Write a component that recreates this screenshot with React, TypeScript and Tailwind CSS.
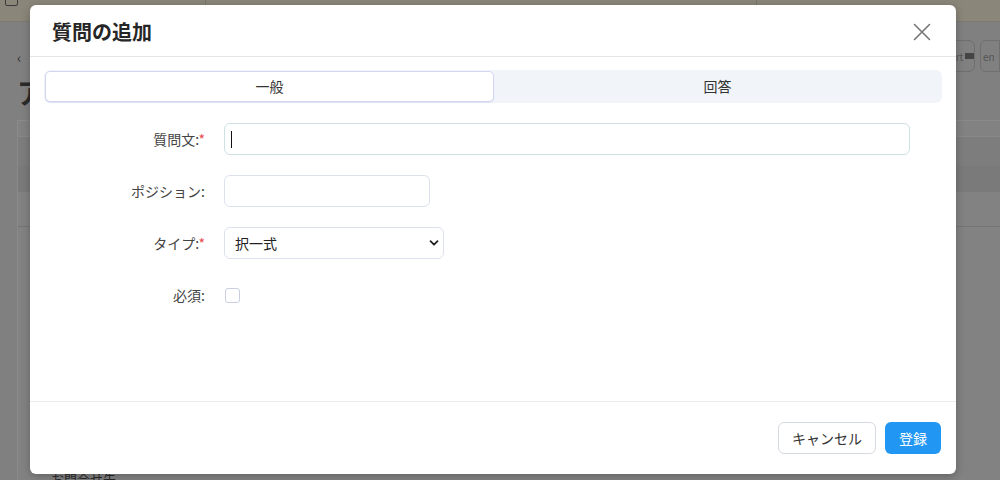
import React from "react";

const jp = { fontFamily: '"Noto Sans CJK JP", "Noto Sans", sans-serif' };

function Background() {
  return (
    <div className="flex h-full w-full flex-col bg-[#808080]">
      <div className="flex h-[22px] items-start overflow-hidden border-b border-[#7d7a72] bg-[#8a8679]">
        <div className="ml-[5px] mt-[-8px] h-[14px] w-[13px] rounded-[2px] border border-[#3a3a3a]" />
        <div className="ml-[187px] h-full w-px bg-[#77746b]" />
        <div className="ml-[550px] h-full w-px bg-[#77746b]" />
      </div>
      <div className="flex flex-1 flex-col pl-[17px]">
        <div className="flex items-start justify-between">
          <div className="flex flex-col">
            <div className="mt-[26px] text-[14px] leading-[18px] text-[#2e2e2e]">‹</div>
            <div className="mt-[10px] text-[28px] font-bold leading-[32px] text-[#2a2a2a]">ア</div>
          </div>
          <div className="mt-[18px] flex gap-[5px]">
            <div className="flex h-[32px] w-[28px] items-center gap-[2px] rounded-[6px] border border-[#6f6f6f] pl-[2px] text-[10px] text-[#555]">
              <span>art</span>
              <span className="h-[6px] w-[10px] bg-[#444]" />
            </div>
            <div className="flex h-[32px] w-[20px] items-center rounded-l-[6px] border border-[#6f6f6f] pl-[2px] text-[10px] text-[#555]">en</div>
          </div>
        </div>
        <div className="mt-[12px] flex flex-1 flex-col border-l border-t border-[#8a8a8a] bg-[#828282]">
          <div className="h-[16px] border-b border-[#888]" />
          <div className="h-[30px] border-b border-[#7a7a7a] bg-[#7d7d7d]" />
          <div className="h-[25px] bg-[#7a7a7a]" />
          <div className="h-[35px] border-b border-[#757575]" />
          <div className="flex-1" />
          <div className="h-[8px] overflow-hidden pl-[33px] text-[13px] leading-[14px] text-[#2a2a2a]" style={jp}>お問合せ先</div>
        </div>
      </div>
    </div>
  );
}

function Label({ text, required }: { text: string; required?: boolean }) {
  return (
    <div className="w-[161px] shrink-0 text-right text-[14px] text-[#444]">
      {text}:
      {required && <span className="text-[#e5484d]">*</span>}
    </div>
  );
}

export default function App() {
  return (
    <div className="relative h-[480px] w-[1000px] overflow-hidden" style={jp}>
      <Background />
      <div className="absolute left-[30px] top-[5px] flex h-[469px] w-[926px] flex-col rounded-[6px] bg-white shadow-[0_2px_8px_rgba(0,0,0,0.25)]">
        <div className="flex h-[52px] shrink-0 items-center justify-between border-b border-[#e4e6ea] pl-[22px] pr-[25px]">
          <div className="pt-[3px] text-[20px] font-bold text-[#262626]">質問の追加</div>
          <svg width="18" height="18" viewBox="0 0 18 18" className="mt-[2px]">
            <path d="M1.5 1.5 L16.5 16.5 M16.5 1.5 L1.5 16.5" stroke="#777" strokeWidth="1.6" strokeLinecap="round" />
          </svg>
        </div>
        <div className="flex flex-1 flex-col px-[14px] pt-[13px]">
          <div className="flex h-[33px] rounded-[6px] bg-[#f1f4f8] p-px">
            <div className="flex flex-1 items-center justify-center rounded-[5px] border border-[#d3d6f0] bg-white text-[14px] text-[#333] shadow-[0_1px_1px_rgba(120,120,200,0.15)]">
              一般
            </div>
            <div className="flex flex-1 items-center justify-center text-[14px] text-[#333]">回答</div>
          </div>
          <div className="mt-[20px] flex flex-col gap-[20px]">
            <div className="flex h-[32px] items-center">
              <Label text="質問文" required />
              <div className="relative ml-[19px] flex h-[32px] w-[686px] items-center rounded-[6px] border border-[#cfe1e6] px-[6px]">
                <span className="h-[17px] w-px bg-[#111]" />
              </div>
            </div>
            <div className="flex h-[32px] items-center">
              <Label text="ポジション" />
              <div className="ml-[19px] h-[32px] w-[206px] rounded-[6px] border border-[#dde1ee]" />
            </div>
            <div className="flex h-[32px] items-center">
              <Label text="タイプ" required />
              <div className="ml-[19px] flex h-[32px] w-[220px] items-center justify-between rounded-[6px] border border-[#dde1ee] pl-[10px] pr-[4px]">
                <span className="text-[14px] text-[#222]">択一式</span>
                <svg width="10" height="10" viewBox="0 0 10 10">
                  <path d="M1.5 3.2 L5 6.7 L8.5 3.2" stroke="#222" strokeWidth="1.8" fill="none" strokeLinecap="round" strokeLinejoin="round" />
                </svg>
              </div>
            </div>
            <div className="flex h-[32px] items-center">
              <Label text="必須" />
              <div className="ml-[20px] h-[15px] w-[15px] rounded-[3px] border border-[#c9cfe0] bg-white" />
            </div>
          </div>
        </div>
        <div className="flex h-[73px] shrink-0 items-center justify-end gap-[9px] border-t border-[#e9ebee] pr-[15px]">
          <div className="flex h-[32px] w-[98px] items-center justify-center rounded-[6px] border border-[#d5d9e0] bg-white text-[14px] text-[#333]">
            キャンセル
          </div>
          <div className="flex h-[32px] w-[56px] items-center justify-center rounded-[6px] bg-[#2196f3] text-[14px] text-white">
            登録
          </div>
        </div>
      </div>
    </div>
  );
}
